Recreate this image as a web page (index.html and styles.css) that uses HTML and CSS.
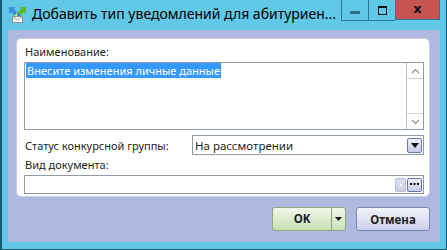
FILE: index.html
```html
<!DOCTYPE html>
<html lang="ru">
<head>
  <meta charset="UTF-8">
  <title>Добавить тип уведомлений</title>
  <link rel="stylesheet" href="styles.css">
</head>
<body>
  <div class="window">
    <!-- title bar -->
    <div class="titlebar">
      <svg class="app-icon" width="17" height="17" viewBox="0 0 17 17">
        <rect x="3.5" y="9.5" width="10" height="6" fill="#f6f6f6" stroke="#8f8f8f"/>
        <path d="M3.5 9.5 L8.5 13 L13.5 9.5" fill="none" stroke="#a8a8a8"/>
        <polygon points="0,0 7,0 5,2 8.5,5.5 5.5,8.5 2,5 0,7" fill="#3c8fd8"/>
        <polygon points="17,0 10,0 12,2 8.5,5.5 11.5,8.5 15,5 17,7" fill="#5fb82a"/>
        <polygon points="5.5,8.5 8.5,5.5 8.5,10" fill="#c6e86a"/>
        <polygon points="11.5,8.5 8.5,5.5 8.5,10" fill="#2f78c0"/>
      </svg>
      <div class="title">Добавить тип уведомлений для абитуриен...</div>
      <div class="controls">
        <div class="ctl ctl-min"><span class="min-bar"></span></div>
        <div class="ctl ctl-max"><span class="max-box"></span></div>
        <div class="ctl ctl-close">x</div>
      </div>
    </div>

    <!-- client area -->
    <div class="client">
      <div class="panel">
        <div class="label">Наименование:</div>
        <div class="memo">
          <div class="memo-text"><span class="selected">Внесите изменения личные данные</span></div>
          <div class="vscroll">
            <div class="sbtn">
              <svg width="9" height="6" viewBox="0 0 9 6"><path d="M1 5 L4.5 1.5 L8 5" fill="none" stroke="#8c8c8c" stroke-width="1.2"/></svg>
            </div>
            <div class="strack"></div>
            <div class="sbtn">
              <svg width="9" height="6" viewBox="0 0 9 6"><path d="M1 1 L4.5 4.5 L8 1" fill="none" stroke="#8c8c8c" stroke-width="1.2"/></svg>
            </div>
          </div>
        </div>

        <div class="row">
          <div class="row-label">Статус конкурсной группы:</div>
          <div class="combo">
            <div class="combo-text">На рассмотрении</div>
            <div class="edit-btn">
              <svg width="8" height="5" viewBox="0 0 8 5"><polygon points="0,0 8,0 4,5" fill="#111"/></svg>
            </div>
          </div>
        </div>

        <div class="label label-doc">Вид документа:</div>
        <div class="edit">
          <div class="edit-text"></div>
          <div class="edit-btn edit-btn-off">
            <svg width="8" height="8" viewBox="0 0 8 8"><circle cx="4" cy="4" r="3.5" fill="#d8d8e4"/><path d="M2.5 2.5 L5.5 5.5 M5.5 2.5 L2.5 5.5" stroke="#f4f4f8" stroke-width="1"/></svg>
          </div>
          <div class="edit-btn">
            <svg width="9" height="3" viewBox="0 0 9 3"><rect x="0" y="0" width="2" height="2" fill="#111"/><rect x="3.5" y="0" width="2" height="2" fill="#111"/><rect x="7" y="0" width="2" height="2" fill="#111"/></svg>
          </div>
        </div>
      </div>

      <div class="footer">
        <div class="btn btn-ok">
          <div class="btn-ok-main">OK</div>
          <div class="btn-ok-drop">
            <svg width="7" height="4" viewBox="0 0 7 4"><polygon points="0,0 7,0 3.5,4" fill="#111"/></svg>
          </div>
        </div>
        <div class="btn btn-cancel">Отмена</div>
      </div>
    </div>
  </div>
</body>
</html>
```

FILE: styles.css
```css
body {
  margin: 0;
  padding: 0;
  font-family: "Noto Sans", "Open Sans", sans-serif;
  font-size: 11px;
  color: #1e1e1e;
}

.window {
  width: 447px;
  height: 250px;
  box-sizing: border-box;
  background-color: #62c8e8;
  border-left: 2px solid #1b5b74;
  border-right: 1px solid #1b5b74;
  border-bottom: 1px solid #1b5b74;
  padding: 0 6px 7px 6px;
  display: flex;
  flex-direction: column;
}

/* title bar */
.titlebar {
  height: 30px;
  display: flex;
  align-items: flex-start;
  flex-shrink: 0;
}

.app-icon {
  flex-shrink: 0;
  margin: 7px 0 0 1px;
}

.title {
  margin: 4px 0 0 6px;
  font-size: 14px;
  color: #000;
  white-space: nowrap;
  flex: 1;
  min-width: 0;
  line-height: 20px;
}

.controls {
  display: flex;
  flex-shrink: 0;
  height: 21px;
}

.ctl {
  height: 20px;
  border: 1px solid #2a7891;
  border-top: none;
  border-right: none;
  display: flex;
  align-items: center;
  justify-content: center;
}

.ctl-min {
  width: 26px;
}

.ctl-max {
  width: 26px;
}

.ctl-close {
  width: 45px;
  background-color: #c75450;
  border-right: 1px solid #2a7891;
  font-family: "DejaVu Sans", sans-serif;
  font-weight: bold;
  font-size: 13px;
  color: #111;
  line-height: 1;
  padding-bottom: 2px;
  box-sizing: border-box;
}

.min-bar {
  width: 10px;
  height: 3px;
  margin-top: 4px;
  background-color: #2b6f88;
}

.max-box {
  width: 7px;
  height: 6px;
  border: 1.5px solid #111;
  border-top-width: 2.5px;
}

/* client area */
.client {
  flex: 1;
  background-color: #afb8df;
  padding: 8px 10px 0 8px;
  display: flex;
  flex-direction: column;
}

.panel {
  background-color: #fff;
  border: 1px solid #c9cde6;
  border-radius: 5px;
  padding: 5px 5px 5px 7px;
  height: 159px;
  box-sizing: border-box;
}

.label {
  height: 16px;
  line-height: 16px;
  padding-left: 1px;
}

.memo {
  margin-top: 2px;
  height: 68px;
  box-sizing: border-box;
  border: 1px solid #8e9aa6;
  display: flex;
}

.memo-text {
  flex: 1;
  padding: 1px 0 0 1px;
  line-height: 14px;
}

.selected {
  background-color: #3399ff;
  color: #fff;
  padding: 0 1px;
}

.vscroll {
  width: 16px;
  border-left: 1px solid #c2c2c2;
  display: flex;
  flex-direction: column;
}

.sbtn {
  height: 15px;
  display: flex;
  align-items: center;
  justify-content: center;
}

.sbtn:first-child {
  border-bottom: 1px solid #d4d4d4;
}

.sbtn:last-child {
  border-top: 1px solid #d4d4d4;
}

.strack {
  flex: 1;
}

.row {
  margin-top: 5px;
  display: flex;
  align-items: center;
  height: 20px;
}

.row-label {
  width: 167px;
  padding-left: 1px;
}

.combo {
  flex: 1;
  height: 20px;
  box-sizing: border-box;
  border: 1px solid #8e9aa6;
  display: flex;
  align-items: center;
  padding-right: 1px;
}

.combo-text {
  flex: 1;
  padding-left: 2px;
  font-size: 11.5px;
}

.label-doc {
  margin-top: 2px;
}

.edit {
  margin-top: 2px;
  height: 19px;
  box-sizing: border-box;
  border: 1px solid #8e9aa6;
  display: flex;
  align-items: center;
  padding-right: 1px;
}

.edit-text {
  flex: 1;
}

.edit-btn {
  width: 15px;
  height: 15px;
  box-sizing: border-box;
  border: 1px solid #6b77ab;
  border-radius: 2px;
  background: linear-gradient(#eef0fa, #c6cbe9);
  display: flex;
  align-items: center;
  justify-content: center;
  margin-left: 1px;
}

.edit .edit-btn {
  height: 14px;
}

.edit-btn-off {
  width: 11px;
  border-color: #b5bbd8;
  background: linear-gradient(#dfe2f2, #c9cde6);
}

/* bottom buttons */
.footer {
  margin-top: 10px;
  display: flex;
  justify-content: flex-end;
  gap: 10px;
}

.btn {
  height: 24px;
  box-sizing: border-box;
  border-radius: 3px;
  font-weight: bold;
  font-size: 11.5px;
  display: flex;
  align-items: center;
  justify-content: center;
}

.btn-ok {
  width: 74px;
  border: 1px solid #8ea37e;
  background: linear-gradient(#f1f8ea, #c8e0b3);
  justify-content: stretch;
}

.btn-ok-main {
  flex: 1;
  text-align: center;
  height: 100%;
  line-height: 22px;
  border-right: 1px solid #8ea37e;
}

.btn-ok-drop {
  width: 13px;
  display: flex;
  align-items: center;
  justify-content: center;
}

.btn-cancel {
  width: 74px;
  border: 1px solid #7b86b6;
  background: linear-gradient(#f2f3fb, #ccd1ec);
}
```
